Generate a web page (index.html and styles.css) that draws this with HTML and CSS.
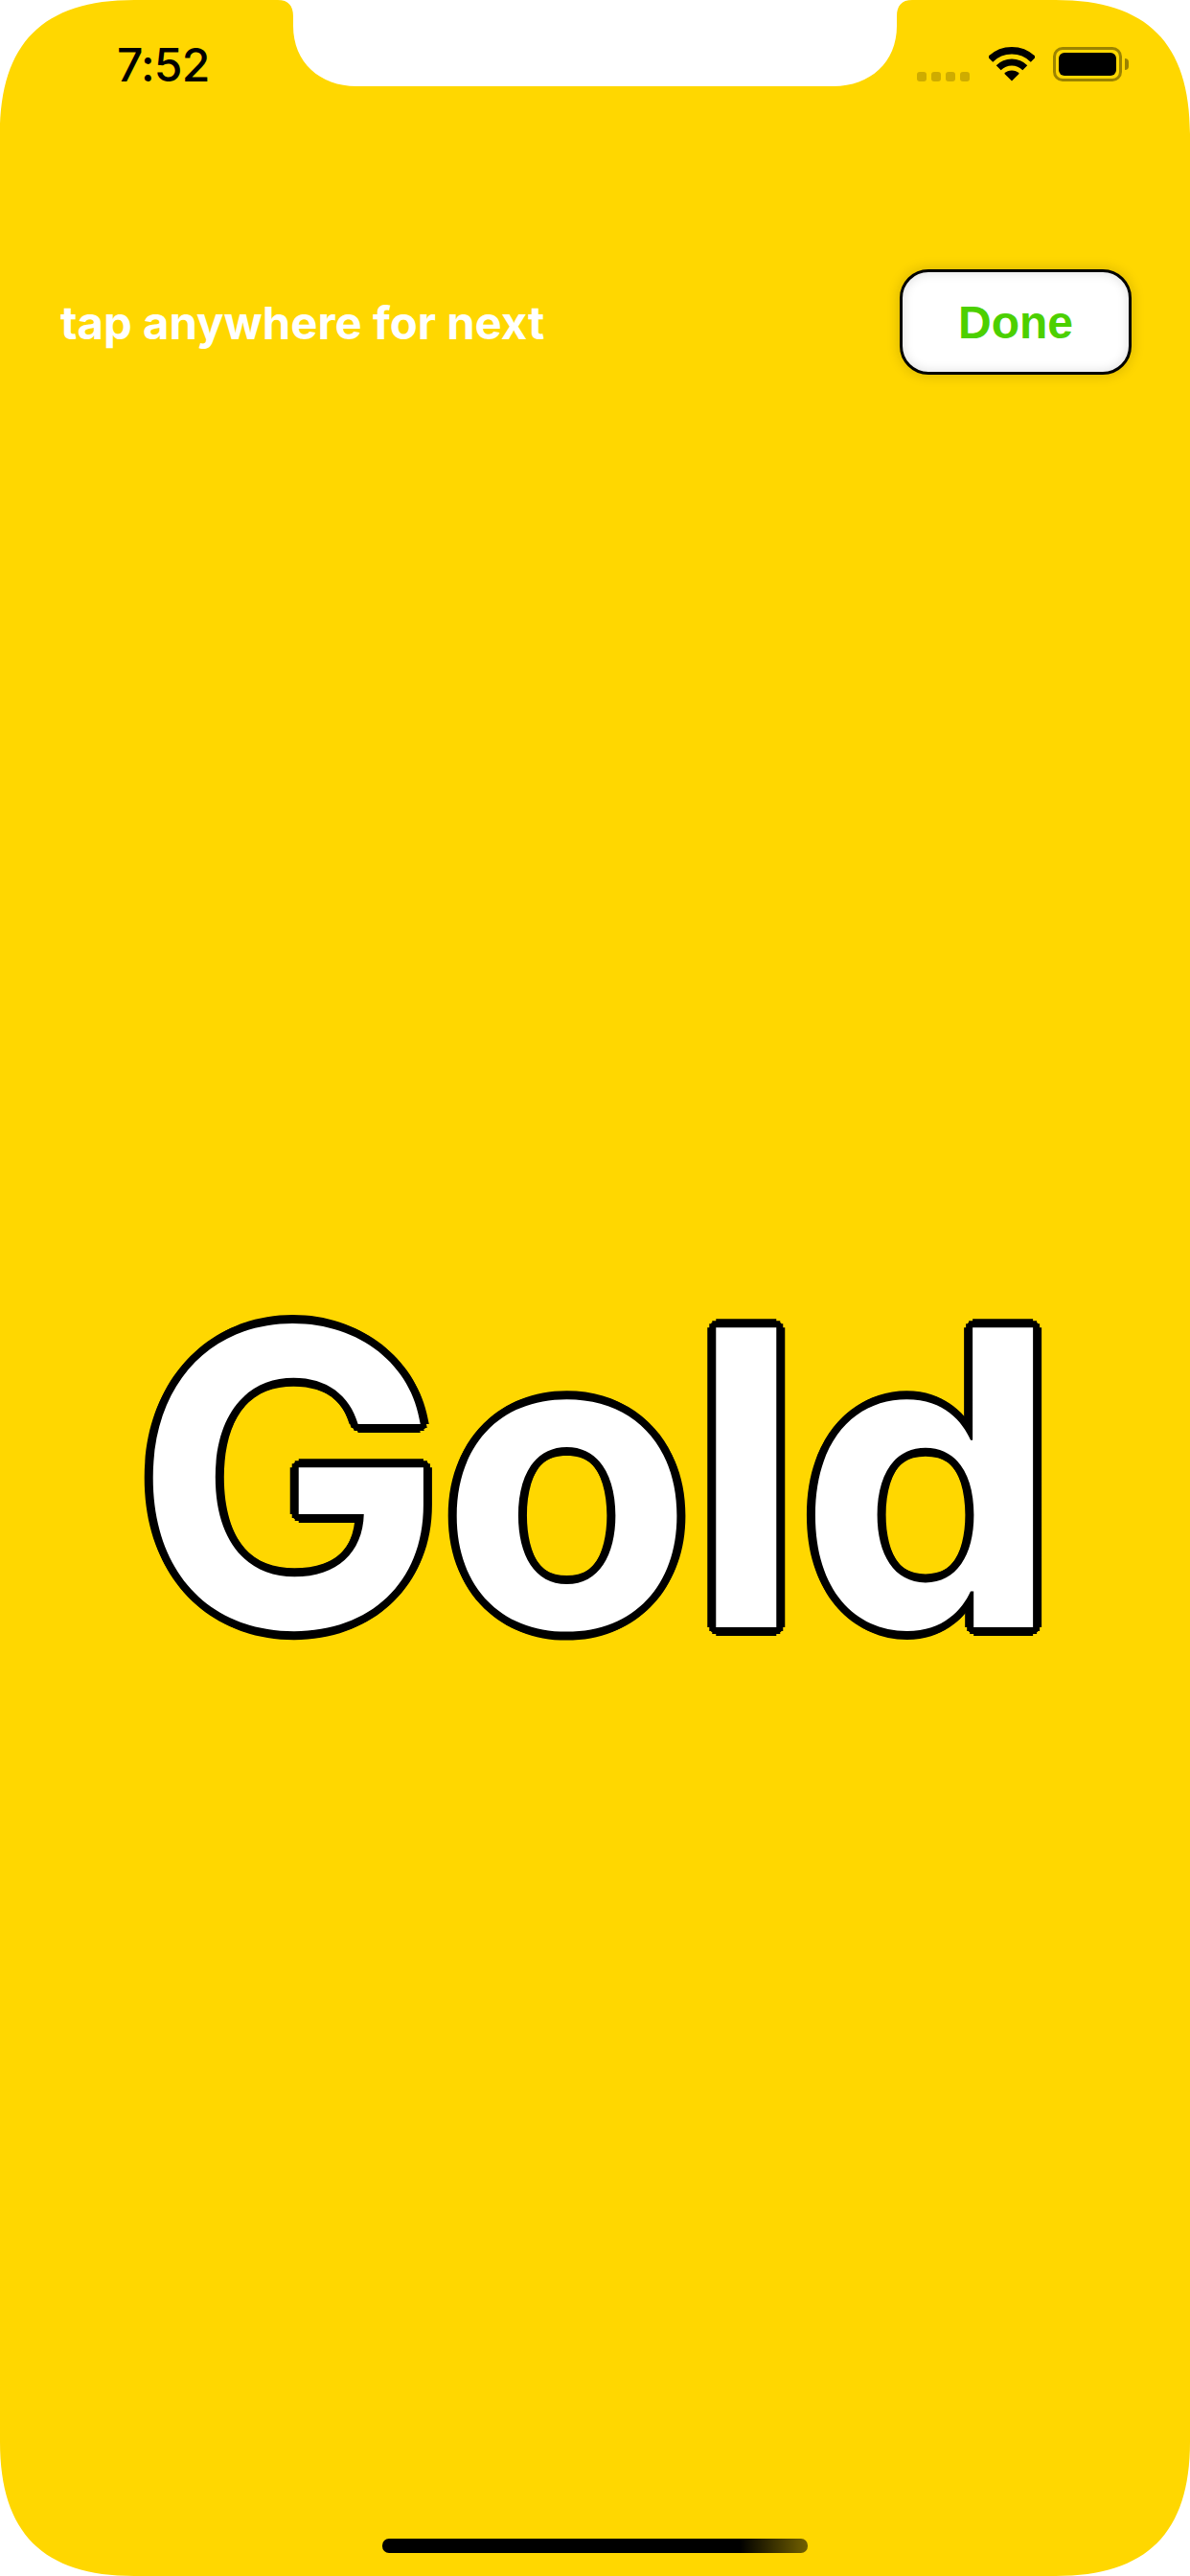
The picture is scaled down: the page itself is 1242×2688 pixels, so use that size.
FILE: index.html
```html
<!DOCTYPE html>
<html lang="en">
<head>
  <meta charset="UTF-8">
  <title>Gold</title>
  <link rel="stylesheet" href="styles.css">
</head>
<body>
  <div class="screen">
    <div class="status-bar">
      <span class="time">7:52</span>
      <div class="status-icons">
        <div class="signal">
          <span class="dot"></span>
          <span class="dot"></span>
          <span class="dot"></span>
          <span class="dot"></span>
        </div>
        <svg class="wifi" width="48" height="36" viewBox="0 0 48 36">
          <path d="M1.55 13.05A31.75 31.75 0 0 1 46.45 13.05" fill="none" stroke="#000" stroke-width="7.5"/>
          <path d="M10.2 21.7A19.5 19.5 0 0 1 37.8 21.7" fill="none" stroke="#000" stroke-width="7"/>
          <path d="M24 35.5L16.2 27.7A11 11 0 0 1 31.8 27.7Z" fill="#000"/>
        </svg>
        <div class="battery">
          <div class="battery-body"><div class="battery-fill"></div></div>
          <div class="battery-cap"></div>
        </div>
      </div>
    </div>

    <div class="top-row">
      <span class="hint">tap anywhere for next</span>
      <button class="done">Done</button>
    </div>

    <div class="word-area">
      <span class="word">Gold</span>
    </div>

    <div class="home-row">
      <div class="home-bar"></div>
    </div>

    <!-- white corners and notch over the screen -->
    <svg class="mask" width="1242" height="2688" viewBox="0 0 1242 2688">
      <path fill="#fff" fill-rule="evenodd" d="M0 0H1242V2688H0Z M0 140V2548C0 2643 45 2688 140 2688H1102C1197 2688 1242 2643 1242 2548V140C1242 45 1197 0 1102 0H952C941 0 936 6 936 17V27C936 65 908 90 870 90H372C334 90 306 65 306 27V17C306 6 301 0 290 0H140C45 0 0 45 0 140Z"/>
    </svg>
  </div>
</body>
</html>
```
FILE: styles.css
```css
body{
  margin: 0;
  background: #fff;
}
.screen{
  position: relative;
  width: 1242px;
  height: 2688px;
  background: #FFD700;
  display: flex;
  flex-direction: column;
  overflow: hidden;
}
.status-bar{
  height: 100px;
  box-sizing: border-box;
  padding: 49px 64px 0 122px;
  display: flex;
  justify-content: space-between;
  align-items: flex-start;
}
.time{
  font-family: "Inter", "Liberation Sans", sans-serif;
  font-size: 48px;
  font-weight: 550;
  letter-spacing: -0.8px;
  line-height: 38px;
  color: #000;
}
.status-icons{
  display: flex;
  align-items: flex-end;
  height: 36px;
}
.signal{
  display: flex;
  gap: 5px;
  margin-right: 20px;
}
.dot{
  width: 10px;
  height: 10px;
  border-radius: 3px;
  background: #CEAC00;
}
.wifi{
  display: block;
  margin-right: 19px;
}
.battery{
  display: flex;
  align-items: center;
}
.battery-body{
  width: 72px;
  height: 36px;
  box-sizing: border-box;
  border: 3px solid #9C8300;
  border-radius: 10px;
  padding: 3px;
}
.battery-fill{
  height: 100%;
  background: #000;
  border-radius: 6px;
}
.battery-cap{
  width: 4px;
  height: 12px;
  margin-left: 3px;
  background: #9C8300;
  border-radius: 0 6px 6px 0;
}
.top-row{
  margin-top: 181px;
  padding: 0 61px 0 63px;
  display: flex;
  justify-content: space-between;
  align-items: center;
}
.hint{
  font-family: "Inter", "Liberation Sans", sans-serif;
  font-size: 47.3px;
  font-weight: 700;
  color: #FFF;
}
.done{
  width: 242px;
  height: 110px;
  box-sizing: border-box;
  padding: 0;
  background: #FFF;
  border: 3px solid #000;
  border-radius: 30px;
  box-shadow: 0 0 14px rgba(0,0,0,.18), inset 0 0 12px rgba(0,0,0,.14);
  font-family: "Liberation Sans", Arial, sans-serif;
  font-size: 48px;
  font-weight: bold;
  color: #4CD000;
}
.word-area{
  flex: 1;
  display: flex;
  justify-content: center;
  padding-top: 936px;
}
.word{
  font-family: "Inter", "Liberation Sans", sans-serif;
  font-size: 430px;
  font-weight: 700;
  letter-spacing: -3px;
  line-height: 1;
  color: #FFF;
  text-shadow:
    -9px 0 0 #000, 9px 0 0 #000, 0 -9px 0 #000, 0 9px 0 #000,
    -5px -5px 0 #000, 5px -5px 0 #000, -5px 5px 0 #000, 5px 5px 0 #000,
    -7px -4px 0 #000, 7px -4px 0 #000, -7px 4px 0 #000, 7px 4px 0 #000,
    -4px -7px 0 #000, 4px -7px 0 #000, -4px 7px 0 #000, 4px 7px 0 #000;
}
.home-row{
  height: 39px;
  display: flex;
  justify-content: center;
}
.home-bar{
  width: 444px;
  height: 15px;
  border-radius: 7px;
  background: linear-gradient(to right, #000 84%, rgba(0,0,0,.55) 100%);
}
.mask{
  position: absolute;
  top: 0;
  left: 0;
}
```
